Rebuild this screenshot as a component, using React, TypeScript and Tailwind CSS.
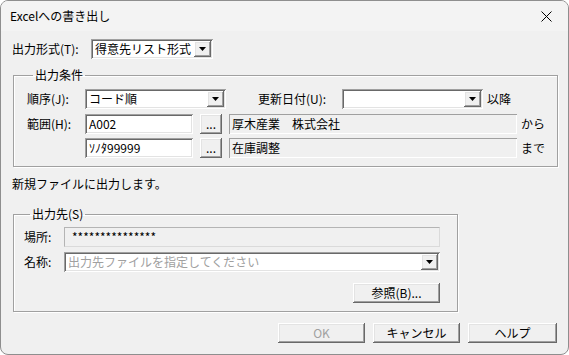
import React from 'react';

const raised =
  'shadow-[inset_-1px_-1px_0_#696969,inset_1px_1px_0_#ffffff,inset_-2px_-2px_0_#a0a0a0,inset_2px_2px_0_#e3e3e3]';
const sunken =
  'shadow-[inset_1px_1px_0_#a0a0a0,inset_-1px_-1px_0_#ffffff,inset_2px_2px_0_#696969,inset_-2px_-2px_0_#e3e3e3]';
const staticEdge = 'shadow-[inset_1px_1px_0_#a0a0a0,inset_-1px_-1px_0_#ffffff]';

const DropArrow = () => (
  <div className={`w-[17px] h-[16px] bg-[#f0f0f0] flex items-center justify-center shrink-0 ${raised}`}>
    <svg width="7" height="4" viewBox="0 0 7 4">
      <path d="M0 0h7L3.5 4z" fill="#000" />
    </svg>
  </div>
);

const Combo: React.FC<{ w: string; text?: string; placeholder?: string }> = ({ w, text, placeholder }) => (
  <div className={`${w} h-[20px] bg-white flex items-center p-[2px] ${sunken}`}>
    <div className={`flex-1 pl-[2px] whitespace-nowrap ${placeholder ? 'text-[#a0a0a0]' : ''}`}>{text ?? placeholder}</div>
    <DropArrow />
  </div>
);

const Edit: React.FC<{ w: string; text: string }> = ({ w, text }) => (
  <div className={`${w} h-[20px] bg-white flex items-center pl-[4px] ${sunken}`}>{text}</div>
);

const Btn: React.FC<{ w: string; label: string; disabled?: boolean }> = ({ w, label, disabled }) => (
  <button
    className={`${w} h-[20px] bg-[#f0f0f0] flex items-center justify-center ${raised} ${
      disabled ? 'text-[#a0a0a0]' : 'text-black'
    }`}
  >
    {label}
  </button>
);

const StaticField: React.FC<{ w: string; text: string }> = ({ w, text }) => (
  <div className={`${w} h-[20px] bg-[#f0f0f0] flex items-center pl-[3px] ${staticEdge}`}>{text}</div>
);

const group = 'border border-[#a0a0a0] shadow-[inset_1px_1px_0_#ffffff,1px_1px_0_#ffffff]';

export default function App() {
  return (
    <div className="w-[569px] h-[355px] bg-[#f0f0f0] border border-[#8e8e8e] rounded-[8px] overflow-hidden flex flex-col text-[12px] leading-[14px] text-black font-['Noto_Sans_CJK_JP','Liberation_Sans',sans-serif]">
      <div className="h-[30px] bg-[#f3f3f3] flex items-center justify-between pl-[9px] pr-[16px]">
        <span>Excelへの書き出し</span>
        <svg width="11" height="11" viewBox="0 0 11 11">
          <path d="M0.5 0.5l10 10M10.5 0.5l-10 10" stroke="#000" strokeWidth="1" />
        </svg>
      </div>

      <div className="flex flex-col px-[11px]">
        <div className="mt-[8px] flex items-center h-[20px]">
          <span className="w-[79px]">出力形式(T):</span>
          <Combo w="w-[122px]" text="得意先リスト形式" />
        </div>

        <fieldset className={`mt-[9px] ml-[1px] w-[545px] pl-[13px] pt-[7px] pb-[8px] ${group}`}>
          <legend className="ml-[6px] px-[2px]">出力条件</legend>
          <div className="flex items-center h-[20px]">
            <span className="w-[58px]">順序(J):</span>
            <Combo w="w-[141px]" text="コード順" />
            <span className="ml-[32px] w-[84px]">更新日付(U):</span>
            <Combo w="w-[141px]" text="" />
            <span className="ml-[4px]">以降</span>
          </div>
          <div className="mt-[5px] flex items-center h-[20px]">
            <span className="w-[58px]">範囲(H):</span>
            <Edit w="w-[108px]" text="A002" />
            <div className="ml-[7px]">
              <Btn w="w-[22px]" label="..." />
            </div>
            <div className="ml-[7px]">
              <StaticField w="w-[288px]" text="厚木産業　株式会社" />
            </div>
            <span className="ml-[4px]">から</span>
          </div>
          <div className="mt-[4px] flex items-center h-[20px]">
            <span className="w-[58px]" />
            <Edit w="w-[108px]" text="ｿﾉﾀ99999" />
            <div className="ml-[7px]">
              <Btn w="w-[22px]" label="..." />
            </div>
            <div className="ml-[7px]">
              <StaticField w="w-[288px]" text="在庫調整" />
            </div>
            <span className="ml-[4px]">まで</span>
          </div>
        </fieldset>

        <div className="mt-[10px]">新規ファイルに出力します。</div>

        <fieldset className={`mt-[16px] ml-[1px] w-[445px] pl-[10px] pt-[6px] pb-[8px] ${group}`}>
          <legend className="ml-[6px] px-[2px]">出力先(S)</legend>
          <div className="w-[416px] flex flex-col">
            <div className="flex items-center h-[20px]">
              <span className="w-[40px]">場所:</span>
              <div className="w-[376px] h-[20px] bg-[#f0f0f0] border border-t-[#b4b4b4] border-l-[#b4b4b4] border-r-[#dadada] border-b-[#dadada] flex items-center pl-[7px]">
                ***************
              </div>
            </div>
            <div className="mt-[5px] flex items-center h-[20px]">
              <span className="w-[40px]">名称:</span>
              <Combo w="w-[376px]" placeholder="出力先ファイルを指定してください" />
            </div>
            <div className="mt-[11px] flex justify-end">
              <Btn w="w-[87px]" label="参照(B)..." />
            </div>
          </div>
        </fieldset>

        <div className="mt-[11px] flex justify-end gap-[8px]">
          <Btn w="w-[87px]" label="OK" disabled />
          <Btn w="w-[87px]" label="キャンセル" />
          <Btn w="w-[89px]" label="ヘルプ" />
        </div>
      </div>
    </div>
  );
}
